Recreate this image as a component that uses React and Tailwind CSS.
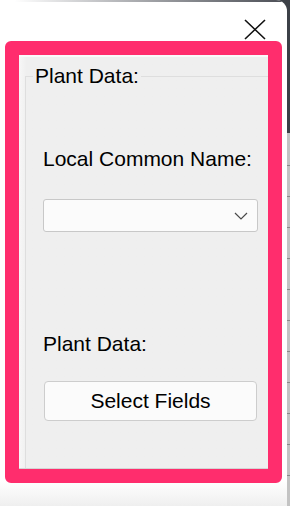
const font = { fontFamily: '"Liberation Sans", Arial, sans-serif' }

function SideStrip() {
  return (
    <div className="w-[3px] h-full flex flex-col">
      <div className="h-[140px] bg-[#3c4047]" />
      <div className="flex-1 bg-[#c3c3c3] flex flex-col">
        <div className="h-[32px]" />
        {Array.from({ length: 11 }).map((_, i) => (
          <div key={i} className="h-[31px] border-t border-[#8a8a8a]" />
        ))}
      </div>
    </div>
  )
}

export default function App() {
  return (
    <div className="w-[290px] h-[506px] flex bg-[#3c4047] overflow-hidden" style={font}>
      <div className="w-[287px] h-full flex flex-col rounded-tr-[11px] overflow-hidden bg-linear-to-b from-white from-95% to-[#efefef]">
        <div className="h-[2px] bg-linear-to-r from-white from-5% to-[#4b4e55]" />
        <div className="h-[39px] flex justify-end items-start pt-[17px] pr-[21px]">
          <svg width="22" height="21" viewBox="0 0 22 21">
            <path d="M1 1 L21 20 M21 1 L1 20" stroke="#111" strokeWidth="1.6" fill="none" />
          </svg>
        </div>

        <div className="ml-[5px] w-[277px] h-[442px] border-[14px] border-[#ff2d6d] rounded-[6px] overflow-hidden">
          <div className="h-full flex flex-col bg-linear-to-r from-[#f7f7f7] to-[#efefef] to-3% border-t-2 border-t-[#fafafa] border-b border-b-[#d4d4d4] pl-[6px] pt-[19px] text-black">
            <div className="relative flex-1 border-l border-t border-[#dedede] pl-[17px] flex flex-col items-start">
              <span className="absolute -top-[13px] left-[7px] px-[2px] bg-[#efefef] text-[21px] leading-[24px]">
                Plant Data:
              </span>

              <p className="mt-[70px] text-[21px] leading-[24px]">Local Common Name:</p>

              <div className="mt-[28px] w-[215px] h-[33px] bg-[#fbfbfb] border border-[#c8c8c8] rounded-[3px] flex items-center justify-end pr-[9px]">
                <svg width="14" height="8" viewBox="0 0 14 8">
                  <path d="M1 1 L7 7 L13 1" stroke="#4a4a4a" strokeWidth="1.2" fill="none" />
                </svg>
              </div>

              <p className="mt-[100px] text-[21px] leading-[24px]">Plant Data:</p>

              <button className="mt-[25px] ml-[1px] w-[213px] h-[40px] bg-[#fbfbfb] border border-[#cdcdcd] rounded-[4px] text-[21px] leading-[24px] flex items-center justify-center">
                Select Fields
              </button>
            </div>
          </div>
        </div>
      </div>
      <SideStrip />
    </div>
  )
}
